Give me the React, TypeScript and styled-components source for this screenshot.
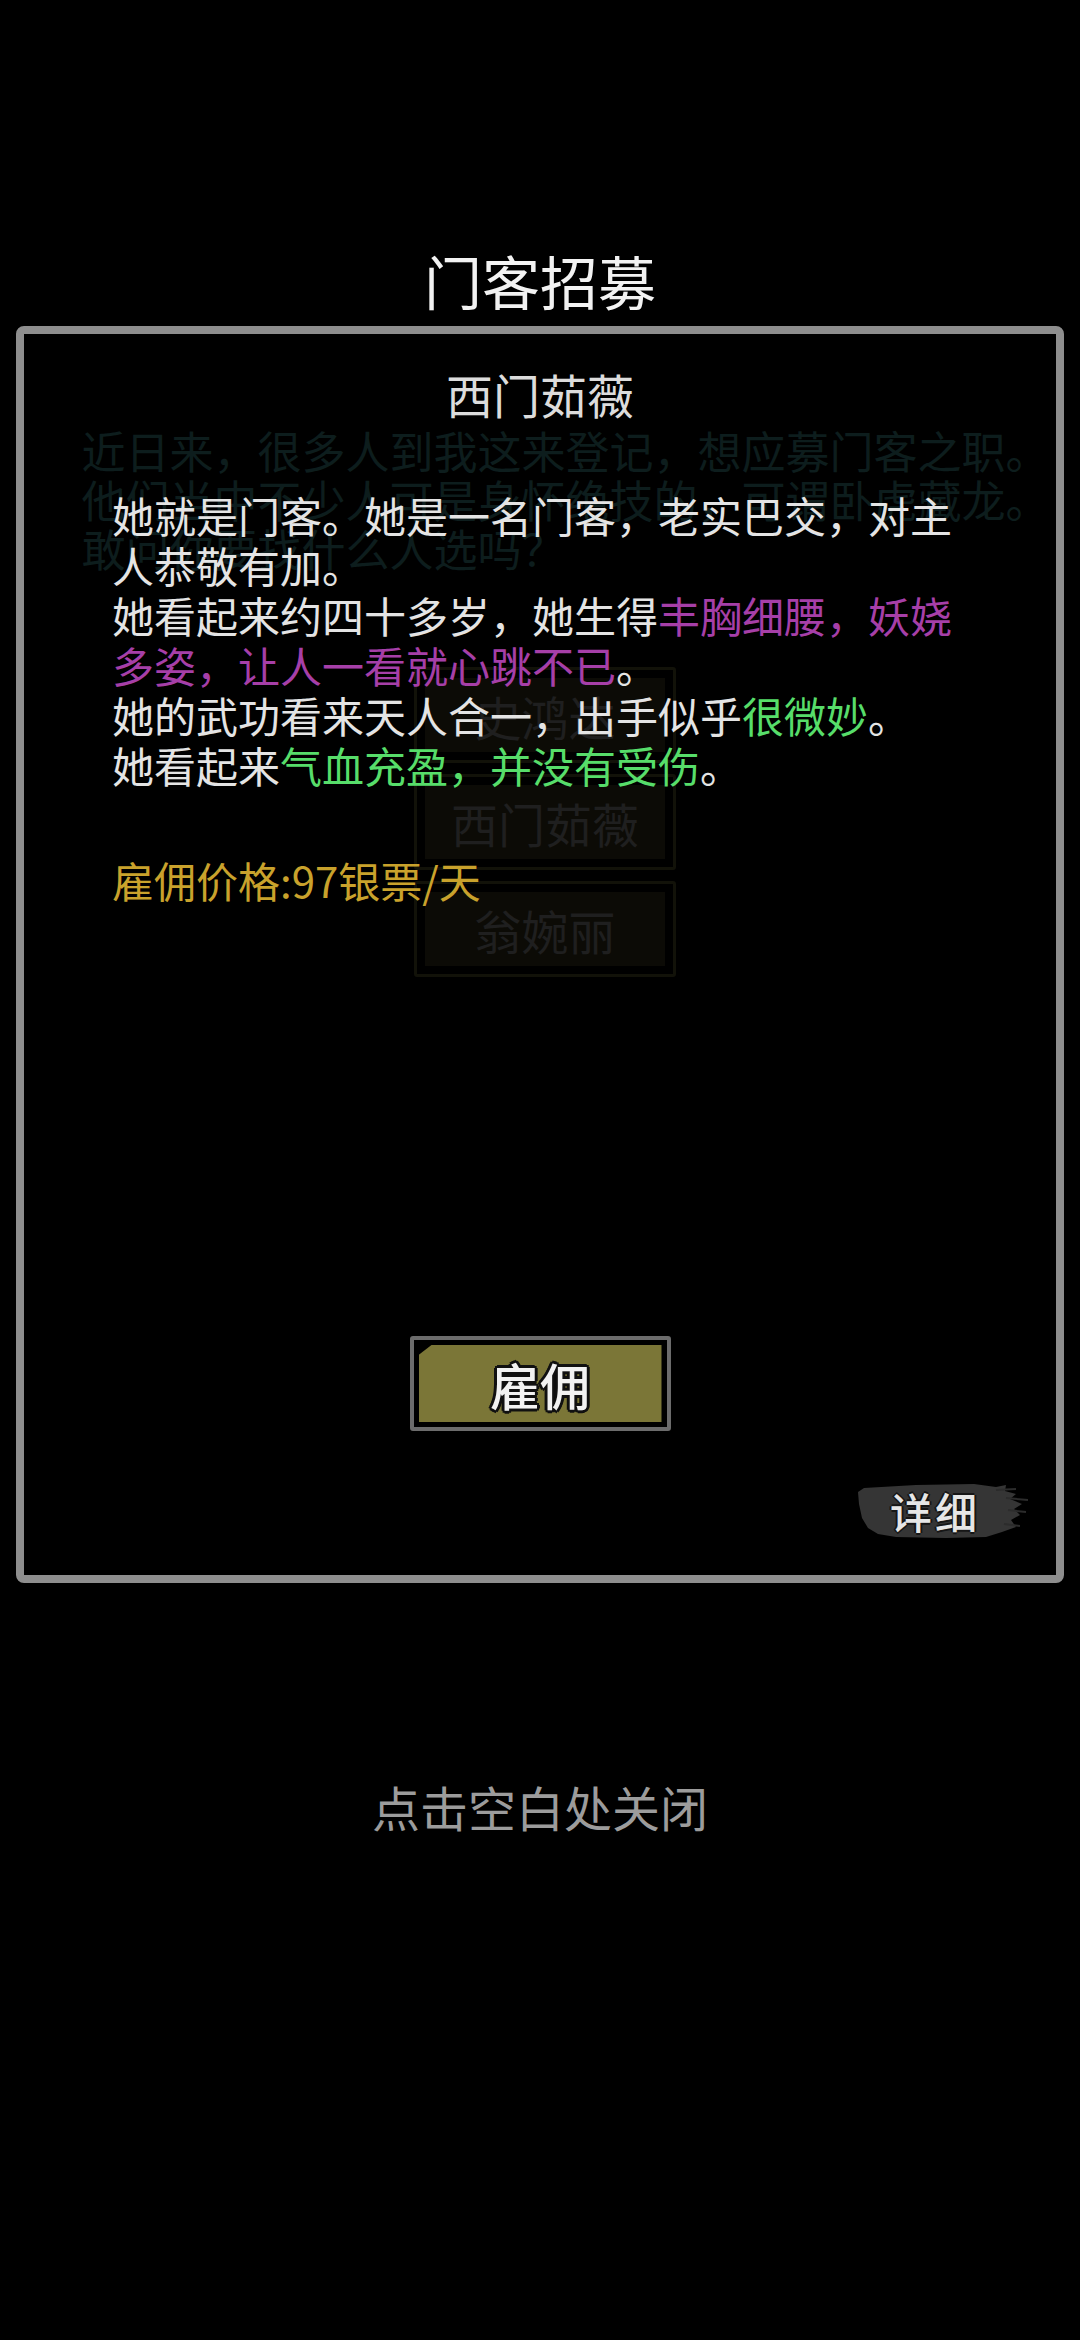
import { createGlobalStyle, styled } from "styled-components";

const GlobalStyle = createGlobalStyle`
  html, body {
    margin: 0;
    padding: 0;
    background: #000;
  }
  * {
    box-sizing: border-box;
  }
`;

const Screen = styled.div`
  position: relative;
  width: 1080px;
  height: 2340px;
  overflow: hidden;
  background: #000;
  font-family: "Noto Sans CJK SC", "Noto Sans", sans-serif;
`;

// dimmed recruit page sitting under the dialog
const Backdrop = styled.div`
  display: flex;
  flex-direction: column;
  align-items: center;
  padding-top: 426px;
`;

const Intro = styled.div`
  width: 975px;
  margin-left: 58px;
  font-size: 44px;
  line-height: 49px;
  color: #0d1d1d;
`;

const Roster = styled.div`
  display: flex;
  flex-direction: column;
  gap: 11px;
  margin-top: 94px;
  margin-left: 10px;
`;

const RosterItem = styled.div`
  width: 262px;
  height: 96px;
  padding: 8px;
  border: 3px solid #121209;
  border-radius: 3px;
`;

const RosterFace = styled.div`
  height: 100%;
  display: flex;
  align-items: center;
  justify-content: center;
  background: #0c0b06;
  font-size: 47px;
  color: #1f1f1f;
`;

const Overlay = styled.div`
  position: absolute;
  inset: 0;
  display: flex;
  flex-direction: column;
  align-items: center;
`;

const Title = styled.div`
  margin-top: 245px;
  height: 70px;
  line-height: 70px;
  font-size: 58px;
  color: #f2f2f2;
`;

const Panel = styled.div`
  margin-top: 11px;
  width: 1048px;
  height: 1257px;
  border: 8px solid #8e8e8e;
  border-radius: 8px;
  display: flex;
  flex-direction: column;
  padding: 30px 0 35px 88px;
`;

const Name = styled.div`
  align-self: center;
  margin-left: -88px;
  height: 60px;
  line-height: 60px;
  font-size: 47px;
  color: #dcdcdc;
`;

const Description = styled.div`
  margin-top: 66px;
  width: 860px;
  display: flex;
  flex-direction: column;
`;

const Para = styled.div`
  font-size: 42px;
  line-height: 50px;
  color: #e4e4e4;
`;

const Tint = styled.span<{ $tone: "charm" | "good" }>`
  color: ${(p) => (p.$tone === "charm" ? "#a63fa8" : "#57dd6a")};
`;

const Price = styled.div`
  margin-top: 65px;
  font-size: 42px;
  line-height: 50px;
  color: #c9a22c;
`;

const Spacer = styled.div`
  flex: 1;
`;

const HireButton = styled.button`
  align-self: center;
  margin-left: -88px;
  width: 261px;
  height: 95px;
  padding: 5px;
  background: #000;
  border: 4px solid #6c6c6c;
  border-radius: 3px;
  cursor: pointer;
`;

const HireFace = styled.div`
  height: 100%;
  display: flex;
  align-items: center;
  justify-content: center;
  background: #7b7637;
  clip-path: polygon(13px 0, 100% 0, 100% 100%, 0 100%, 0 10px);
  font-family: "Noto Sans CJK SC", sans-serif;
  font-size: 50px;
  font-weight: 500;
  color: #f2f2f2;
  text-shadow: 2px 0 0 #111, -2px 0 0 #111, 0 2px 0 #111, 0 -2px 0 #111,
    2px 2px 0 #111, -2px -2px 0 #111, 2px -2px 0 #111, -2px 2px 0 #111,
    3px 0 0 #111, -3px 0 0 #111, 0 3px 0 #111, 0 -3px 0 #111;
`;

const DetailRow = styled.div`
  margin-top: 51px;
  display: flex;
  justify-content: flex-end;
  padding-right: 28px;
`;

const DetailButton = styled.div`
  position: relative;
  width: 172px;
  height: 58px;
  display: flex;
  align-items: center;
  padding-left: 34px;
  cursor: pointer;
`;

const Brush = styled.svg`
  position: absolute;
  inset: 0;
`;

const DetailLabel = styled.span`
  position: relative;
  font-size: 42px;
  font-weight: 500;
  line-height: 1;
  letter-spacing: 3px;
  color: #e6e6e6;
  text-shadow: 2px 0 0 #161616, -2px 0 0 #161616, 0 2px 0 #161616,
    0 -2px 0 #161616;
`;

const CloseHint = styled.div`
  margin-top: 193px;
  height: 60px;
  line-height: 60px;
  font-size: 48px;
  color: #9c9c9c;
`;

const roster = ["史鸿达", "西门茹薇", "翁婉丽"];

export default function App() {
  return (
    <Screen>
      <GlobalStyle />
      <Backdrop>
        <Intro>
          近日来，很多人到我这来登记，想应募门客之职。他们当中不少人可是身怀绝技的，可谓卧虎藏龙。敢问你要找什么人选吗？
        </Intro>
        <Roster>
          {roster.map((n) => (
            <RosterItem key={n}>
              <RosterFace>{n}</RosterFace>
            </RosterItem>
          ))}
        </Roster>
      </Backdrop>

      <Overlay>
        <Title>门客招募</Title>
        <Panel>
          <Name>西门茹薇</Name>
          <Description>
            <Para>她就是门客。她是一名门客，老实巴交，对主人恭敬有加。</Para>
            <Para>
              她看起来约四十多岁，她生得
              <Tint $tone="charm">丰胸细腰，妖娆多姿，让人一看就心跳不已</Tint>。
            </Para>
            <Para>
              她的武功看来天人合一，出手似乎<Tint $tone="good">很微妙</Tint>。
            </Para>
            <Para>
              她看起来<Tint $tone="good">气血充盈，并没有受伤</Tint>。
            </Para>
          </Description>
          <Price>雇佣价格:97银票/天</Price>
          <Spacer />
          <HireButton>
            <HireFace>雇佣</HireFace>
          </HireButton>
          <DetailRow>
            <DetailButton>
              <Brush viewBox="0 0 172 58" width="172" height="58">
                <path
                  d="M8 6 L60 3 L118 2 L140 5 L150 3 L149 9 L160 12 L154 17 L166 22 L158 27 L164 33 L155 38 L160 45 L146 50 L130 55 L90 56 L40 55 L22 52 L12 46 L6 36 L3 22 L2 10 Z"
                  fill="#353535"
                />
                <path
                  d="M150 16 L172 18 M152 28 L170 30 M148 42 L164 44 M140 8 L160 7"
                  stroke="#2c2c2c"
                  strokeWidth="2"
                />
              </Brush>
              <DetailLabel>详细</DetailLabel>
            </DetailButton>
          </DetailRow>
        </Panel>
        <CloseHint>点击空白处关闭</CloseHint>
      </Overlay>
    </Screen>
  );
}
